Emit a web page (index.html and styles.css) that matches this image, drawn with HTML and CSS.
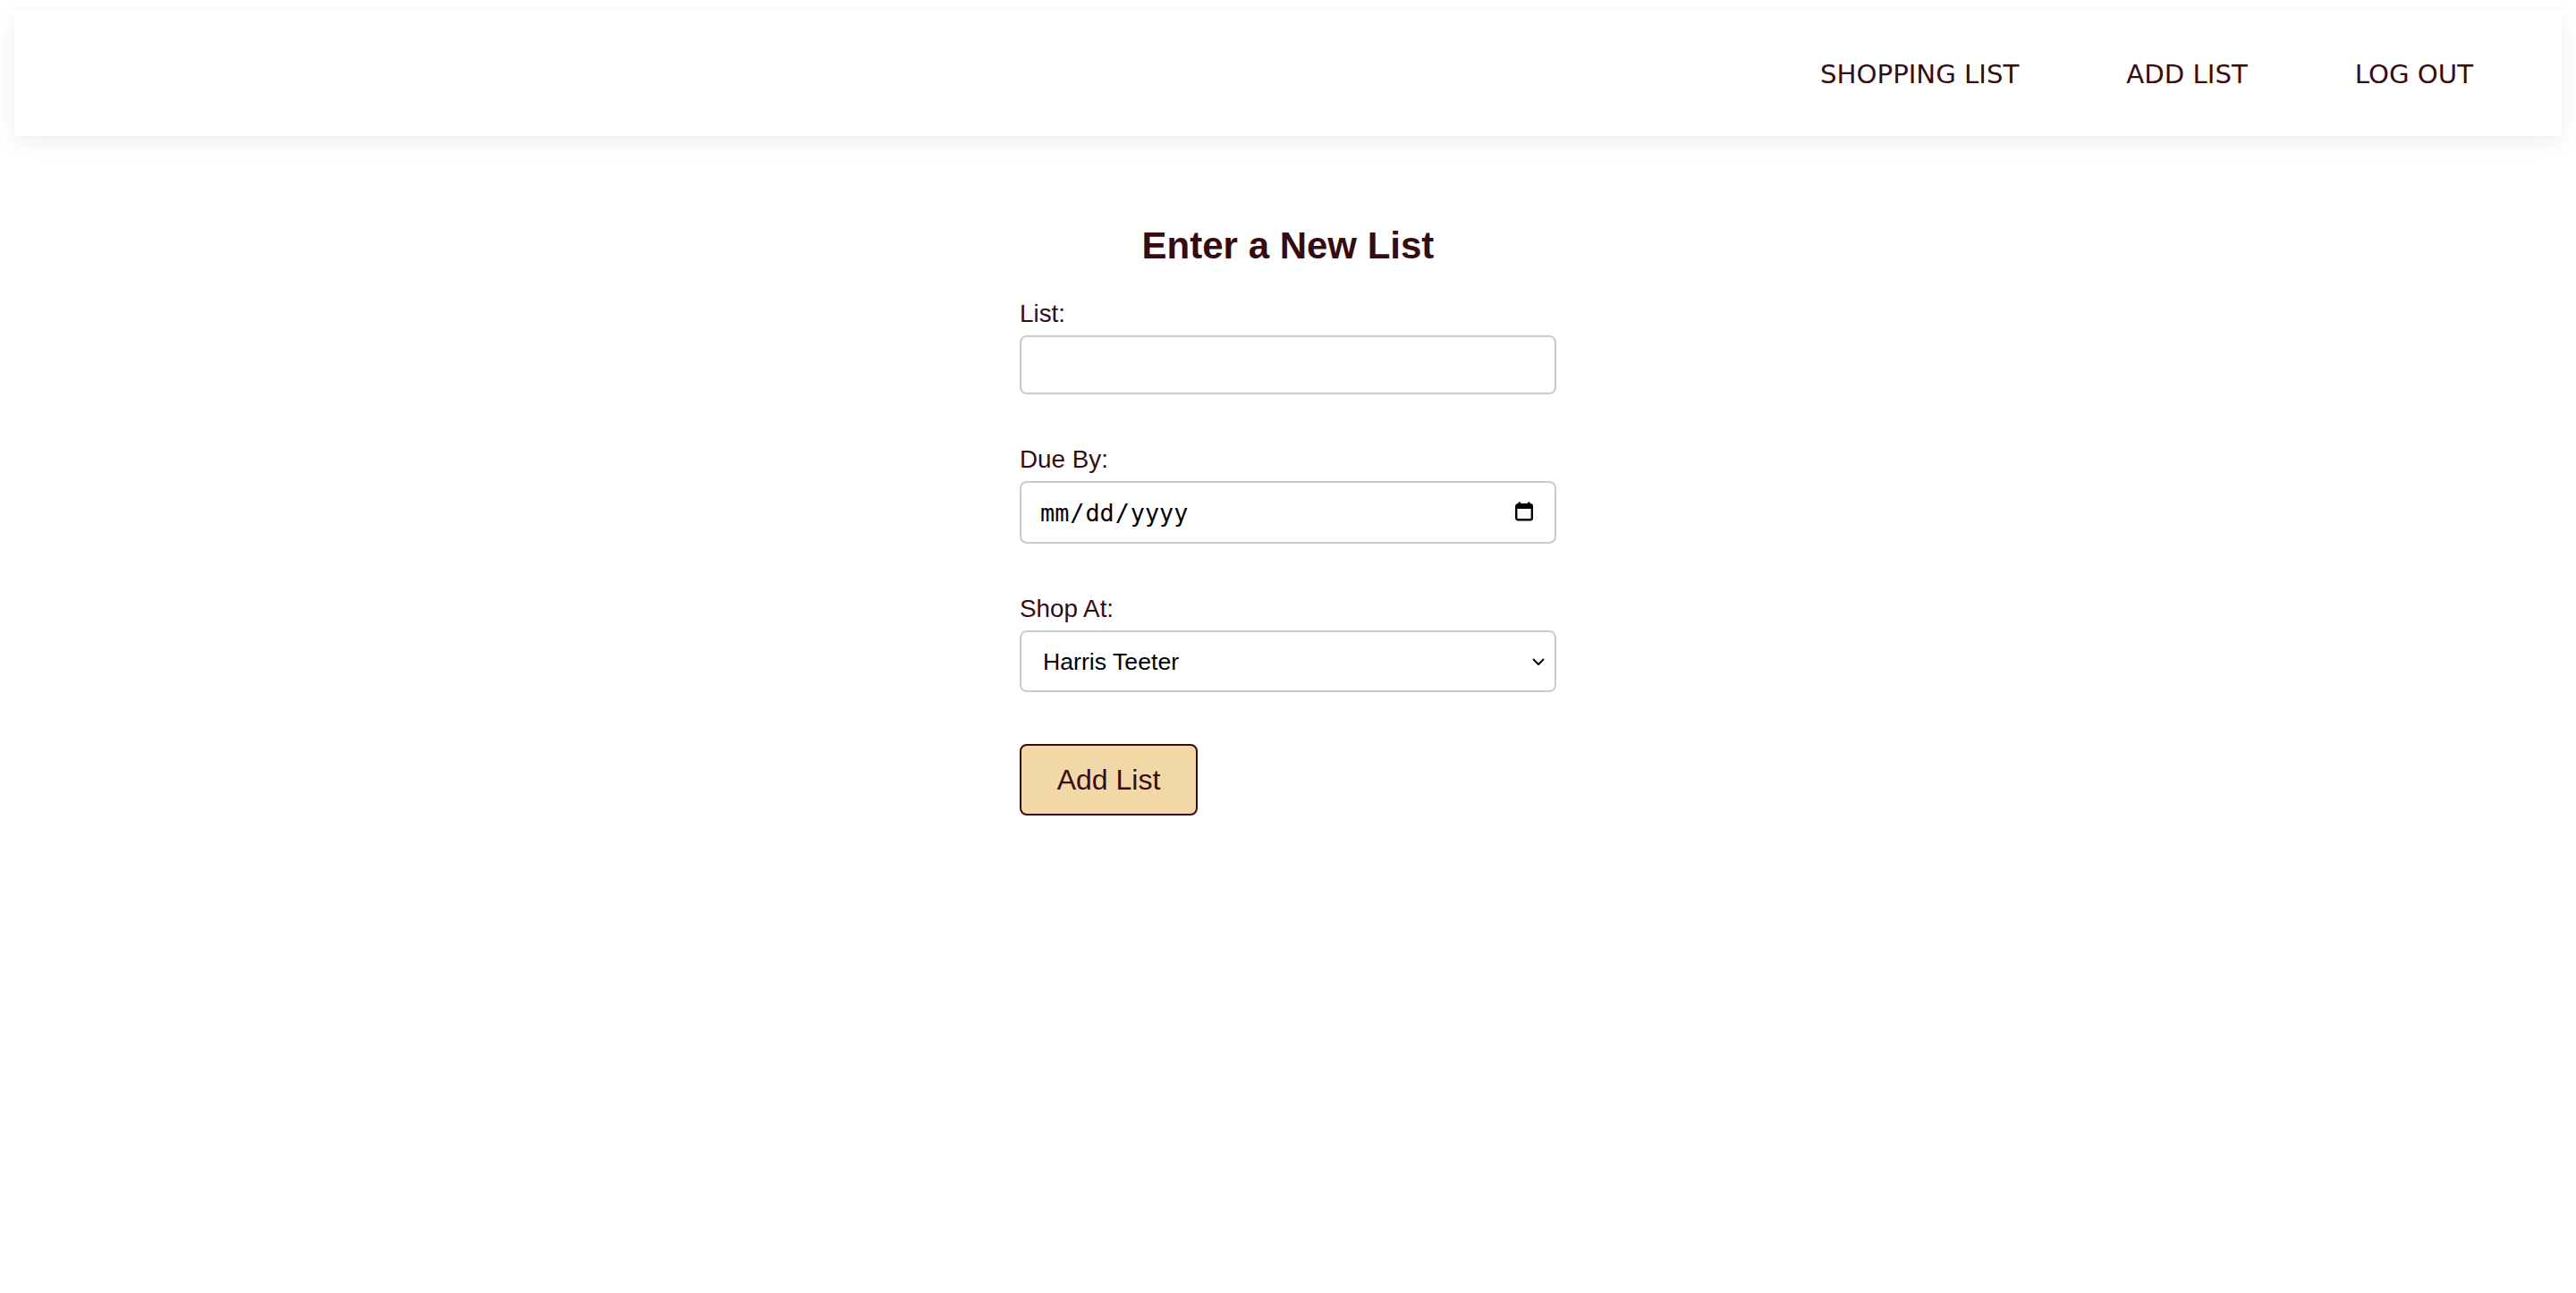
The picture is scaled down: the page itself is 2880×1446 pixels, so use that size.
FILE: index.html
```html
<!DOCTYPE html>
<html lang="en">
<head>
<meta charset="utf-8">
<title>Add List</title>
<link rel="stylesheet" href="styles.css">
</head>
<body>
<header class="topbar">
  <nav class="nav">
    <a class="nav-link" href="#">SHOPPING LIST</a>
    <a class="nav-link" href="#">ADD LIST</a>
    <a class="nav-link" href="#">LOG OUT</a>
  </nav>
</header>
<main class="page">
  <h2 class="title">Enter a New List</h2>
  <form class="form">
    <div class="field">
      <label class="label" for="list">List:</label>
      <input class="control control-text" id="list" type="text">
    </div>
    <div class="field">
      <label class="label" for="due">Due By:</label>
      <div class="control-wrap">
        <input class="control control-date" id="due" type="date">
        <svg class="cal-icon" width="22" height="22" viewBox="0 0 22 22" aria-hidden="true">
          <rect x="2.2" y="3.2" width="17.6" height="17" rx="2" fill="none" stroke="#000" stroke-width="2.4"/>
          <rect x="2" y="3" width="18" height="5" fill="#000"/>
          <rect x="4.5" y="0.5" width="2.6" height="4" fill="#000"/>
          <rect x="14.9" y="0.5" width="2.6" height="4" fill="#000"/>
        </svg>
      </div>
    </div>
    <div class="field">
      <label class="label" for="shop">Shop At:</label>
      <div class="control-wrap">
        <select class="control control-select" id="shop">
          <option>Harris Teeter</option>
          <option>Food Lion</option>
          <option>Whole Foods</option>
        </select>
        <svg class="chev" width="16" height="10" viewBox="0 0 16 10" aria-hidden="true">
          <path d="M2 2 L8 8 L14 2" fill="none" stroke="#000" stroke-width="2"/>
        </svg>
      </div>
    </div>
    <button class="btn" type="button">Add List</button>
  </form>
</main>
</body>
</html>
```
FILE: styles.css
```css
* { box-sizing: border-box; }

html, body {
  background: #ffffff;
}

body {
  margin: 0;
  padding: 12px 16px 0;
  font-family: "Liberation Sans", Arial, sans-serif;
  color: #370c10;
}

.topbar {
  height: 140px;
  background: #ffffff;
  box-shadow: 0 6px 24px rgba(0, 0, 0, 0.07);
  display: flex;
  align-items: center;
  justify-content: flex-end;
  padding-right: 99px;
  padding-top: 3px;
}

.nav {
  display: flex;
  gap: 120px;
  align-items: center;
}

.nav-link {
  font-family: "DejaVu Sans", Verdana, sans-serif;
  font-size: 29.2px;
  color: #370c10;
  text-decoration: none;
  line-height: 1;
}

.page {
  display: flex;
  flex-direction: column;
  align-items: center;
}

.title {
  margin: 99px 0 0;
  font-size: 42px;
  font-weight: 700;
  line-height: 48px;
  color: #370c10;
}

.form {
  width: 600px;
  margin-top: 36px;
  display: flex;
  flex-direction: column;
}

.field {
  display: flex;
  flex-direction: column;
  margin-bottom: 57px;
}

.field:last-of-type {
  margin-bottom: 58px;
}

.label {
  font-size: 27.8px;
  line-height: 31px;
  margin-bottom: 9px;
  color: #370c10;
}

.control {
  width: 600px;
  border: 2px solid #cccccc;
  border-radius: 8px;
  background: #ffffff;
  color: #000000;
  outline: none;
  margin: 0;
}

.control-text {
  height: 66px;
  padding: 0 20px;
  font-size: 27px;
  font-family: "Liberation Sans", Arial, sans-serif;
}

.control-wrap {
  position: relative;
}

.control-date {
  height: 70px;
  padding: 0 20px;
  font-family: "DejaVu Sans Mono", monospace;
  font-size: 26.8px;
  display: block;
}

.control-date::-webkit-calendar-picker-indicator {
  opacity: 0;
}

.cal-icon {
  position: absolute;
  right: 25px;
  top: 23px;
  pointer-events: none;
}

.control-select {
  height: 69px;
  padding: 0 24px;
  font-family: "Liberation Sans", Arial, sans-serif;
  font-size: 26.67px;
  -webkit-appearance: none;
  appearance: none;
  display: block;
}

.chev {
  position: absolute;
  right: 12px;
  top: 30px;
  pointer-events: none;
}

.btn {
  align-self: flex-start;
  width: 199px;
  height: 80px;
  background: #f3d8a7;
  border: 2px solid #370c10;
  border-radius: 8px;
  font-family: "Liberation Sans", Arial, sans-serif;
  font-size: 32px;
  color: #370c10;
  padding: 0;
  cursor: pointer;
}
```
